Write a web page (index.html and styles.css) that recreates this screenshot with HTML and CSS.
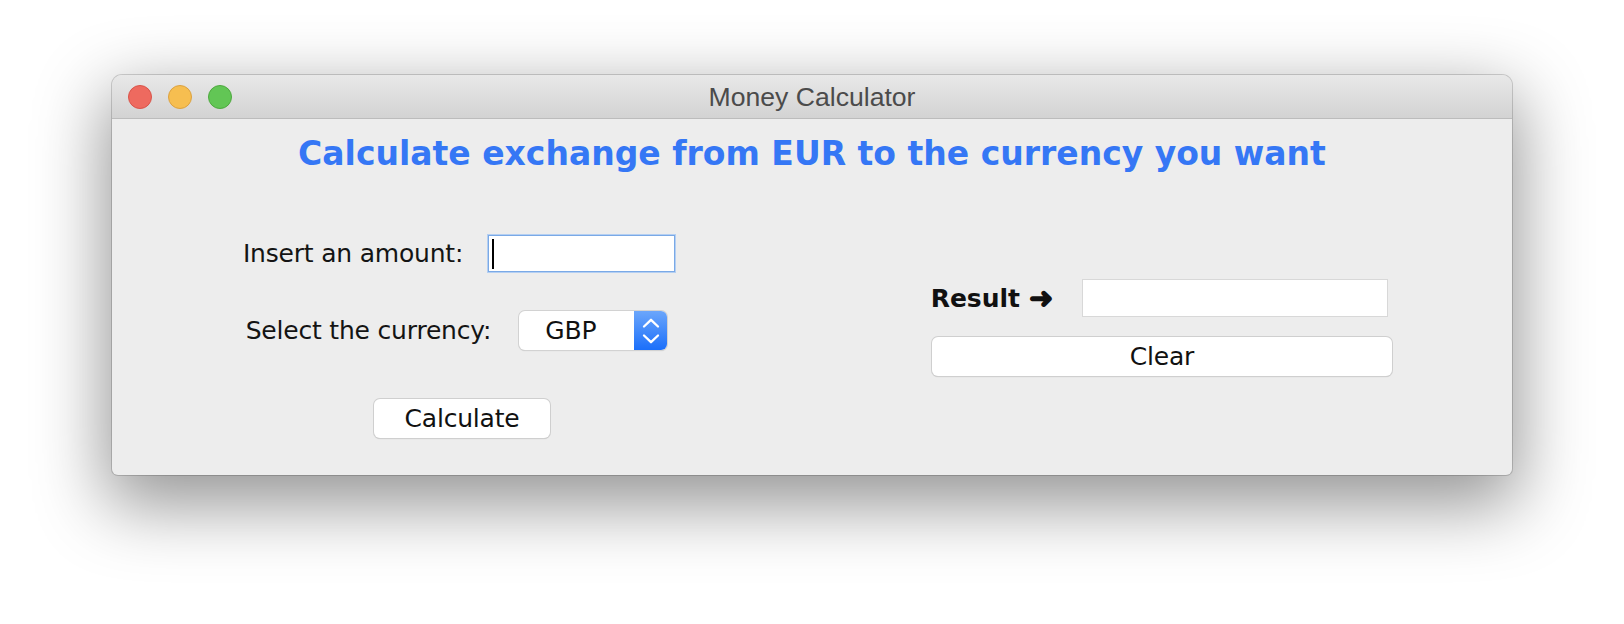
FILE: index.html
```html
<!DOCTYPE html>
<html>
<head>
<meta charset="utf-8">
<title>Money Calculator</title>
<link rel="stylesheet" href="styles.css">
</head>
<body>
<div class="window">
  <div class="titlebar">
    <div class="lights">
      <span class="light red"></span>
      <span class="light yellow"></span>
      <span class="light green"></span>
    </div>
    <div class="title">Money Calculator</div>
    <div></div>
  </div>
  <div class="content">
    <h1 class="heading">Calculate exchange from EUR to the currency you want</h1>
    <div class="columns">
      <div class="col left">
        <div class="row row-amount">
          <label class="label">Insert an amount:</label>
          <div class="field focused"><span class="caret"></span></div>
        </div>
        <div class="row row-currency">
          <label class="label">Select the currency:</label>
          <div class="select">
            <span class="select-value">GBP</span>
            <span class="select-arrows">
              <svg width="18" height="30" viewBox="0 0 18 30">
                <path d="M2 10.5 L9 3.8 L16 10.5" fill="none" stroke="#fff" stroke-width="2.3" stroke-linecap="round" stroke-linejoin="round"/>
                <path d="M2 19.5 L9 26.2 L16 19.5" fill="none" stroke="#fff" stroke-width="2.3" stroke-linecap="round" stroke-linejoin="round"/>
              </svg>
            </span>
          </div>
        </div>
        <button class="btn btn-calc">Calculate</button>
      </div>
      <div class="col right">
        <div class="row row-result">
          <span class="label bold">Result <span class="arrow">➜</span></span>
          <div class="field result-field"></div>
        </div>
        <button class="btn btn-clear">Clear</button>
      </div>
    </div>
  </div>
</div>
</body>
</html>
```

FILE: styles.css
```css
html, body {
  margin: 0;
  padding: 0;
  background: #ffffff;
}

body {
  width: 1624px;
  height: 624px;
  overflow: hidden;
  font-family: "DejaVu Sans", "Liberation Sans", sans-serif;
}

.window {
  width: 1400px;
  margin: 75px 0 0 112px;
  border-radius: 10px 10px 6px 6px;
  overflow: hidden;
  background: #ededed;
  box-shadow: 0 0 0 1px rgba(0, 0, 0, 0.16), 0 24px 70px 6px rgba(0, 0, 0, 0.42);
}

.titlebar {
  height: 44px;
  box-sizing: border-box;
  display: grid;
  grid-template-columns: 1fr auto 1fr;
  align-items: center;
  background: linear-gradient(#e8e8e8, #d3d3d3);
  border-bottom: 1px solid #bcbcbc;
}

.lights {
  display: flex;
  gap: 16px;
  padding-left: 16px;
}

.light {
  width: 24px;
  height: 24px;
  border-radius: 50%;
  box-sizing: border-box;
}

.red { background: #ee6a5f; border: 1px solid #d8544a; }
.yellow { background: #f6be50; border: 1px solid #dba140; }
.green { background: #62c655; border: 1px solid #4ea83f; }

.title {
  font-family: "Liberation Sans", Arial, sans-serif;
  font-size: 26.6px;
  color: #4b4b4b;
  padding-top: 2px;
}

.content {
  height: 356px;
  box-sizing: border-box;
  padding-top: 16px;
}

.heading {
  margin: 0;
  text-align: center;
  font-size: 33px;
  line-height: 38px;
  font-weight: bold;
  color: #3577f5;
}

.columns {
  display: grid;
  grid-template-columns: 1fr 1fr;
}

.col {
  display: flex;
  flex-direction: column;
  align-items: center;
}

.left { padding-top: 62px; }
.right { padding-top: 106px; }

.row {
  display: flex;
  align-items: center;
}

.row-amount { gap: 25px; height: 37px; margin-right: 6px; }
.row-currency { gap: 28px; height: 39px; margin-top: 39px; margin-right: 11px; }
.row-result { gap: 29px; height: 38px; margin-right: 5px; }

.label {
  font-size: 25px;
  letter-spacing: -0.2px;
  color: #141414;
}

.bold {
  font-weight: bold;
  letter-spacing: 0;
  color: #111;
  display: flex;
  align-items: center;
  gap: 9px;
}

.arrow {
  font-family: "DejaVu Sans", sans-serif;
  font-weight: bold;
  font-size: 29px;
  line-height: 1;
  -webkit-text-stroke: 1.4px #111;
}

.field {
  box-sizing: border-box;
  background: #fff;
  position: relative;
}

.focused {
  width: 187px;
  height: 37px;
  border: 1px solid #7aa9e6;
  box-shadow: 0 0 0 1px #b4cff2;
}

.caret {
  position: absolute;
  left: 3px;
  top: 3px;
  width: 2px;
  height: 30px;
  background: #000;
}

.result-field {
  width: 306px;
  height: 38px;
  border: 1px solid #d8d8d8;
}

.select {
  width: 148px;
  height: 39px;
  box-sizing: border-box;
  display: flex;
  border-radius: 6px;
  background: #fff;
  box-shadow: 0 0 0 1px #d2d2d2, 0 1px 1px rgba(0, 0, 0, 0.18);
  overflow: hidden;
}

.select-value {
  flex: 1;
  padding-left: 26px;
  font-size: 25px;
  letter-spacing: -0.2px;
  line-height: 39px;
  color: #111;
}

.select-arrows {
  width: 33px;
  display: flex;
  align-items: center;
  justify-content: center;
  background: linear-gradient(#6ba6fb, #1b6ffa);
}

.select-arrows svg {
  display: block;
}

.btn {
  box-sizing: border-box;
  height: 39px;
  border: none;
  border-radius: 6px;
  background: #fff;
  box-shadow: 0 0 0 1px #cfcfcf, 0 1px 1px rgba(0, 0, 0, 0.2);
  font-family: "DejaVu Sans", "Liberation Sans", sans-serif;
  font-size: 25px;
  letter-spacing: -0.2px;
  color: #111;
  padding: 0;
}

.btn-calc {
  width: 176px;
  margin-top: 49px;
}

.btn-clear {
  width: 460px;
  margin-top: 20px;
}
```
